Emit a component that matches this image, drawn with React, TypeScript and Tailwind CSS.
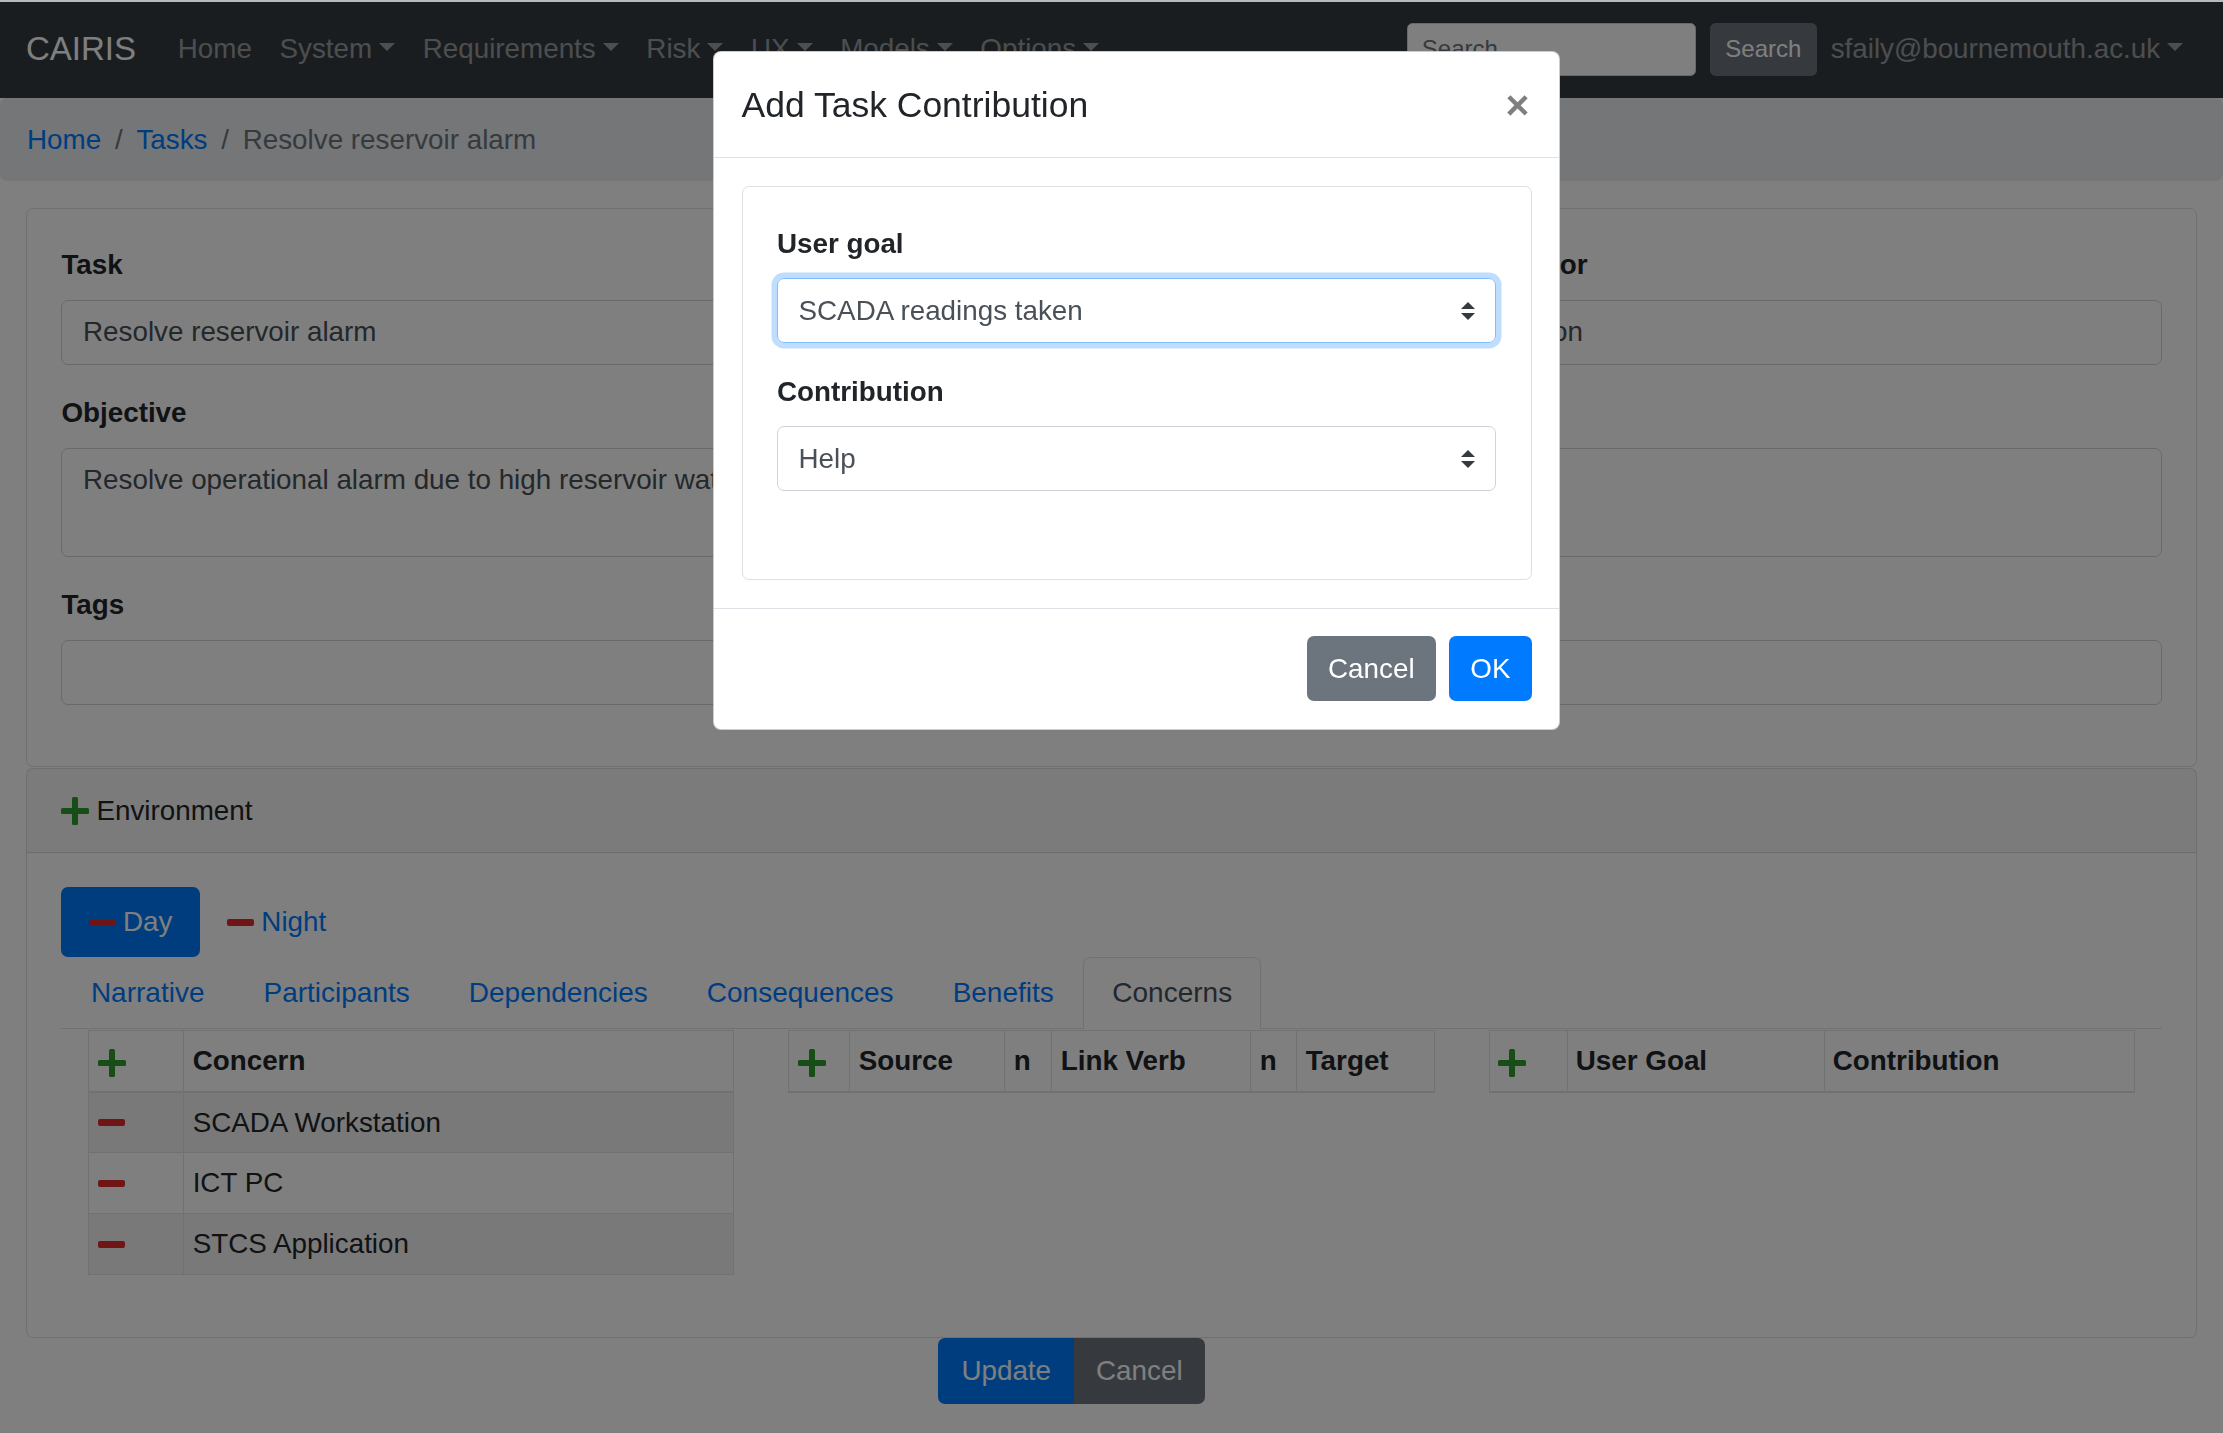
import React from "react";

// Small dropdown caret used by the navbar toggles.
function Caret() {
  return (
    <span className="ml-[0.255em] inline-block h-0 w-0 border-x-[0.3em] border-t-[0.3em] border-b-0 border-x-transparent border-t-current align-[0.255em]" />
  );
}

function PlusIcon() {
  return (
    <svg width="28" height="28" viewBox="0 0 28 28" className="inline-block shrink-0">
      <rect x="11" y="0" width="6" height="28" rx="1.5" fill="#2f9a2f" />
      <rect x="0" y="11" width="28" height="6" rx="1.5" fill="#2f9a2f" />
    </svg>
  );
}

function MinusIcon() {
  return <span className="inline-block h-[7px] w-[27px] shrink-0 rounded-[2px] bg-[#e02a2a]" />;
}

function SelectArrows() {
  return (
    <svg width="14" height="18" viewBox="0 0 14 18" className="shrink-0">
      <path d="M7 0 L14 7 L0 7 Z" fill="#343a40" />
      <path d="M0 11 L14 11 L7 18 Z" fill="#343a40" />
    </svg>
  );
}

function Field({ label, children }: { label: string; children: React.ReactNode }) {
  return (
    <div className="mb-[27.5px]">
      <label className="mb-[13.75px] block font-bold">{label || "\u00a0"}</label>
      {children}
    </div>
  );
}

const inputClass =
  "block h-[65px] w-full rounded-[7px] border border-[#ced4da] bg-white px-[20.6px] text-[#495057] outline-none";
const textareaClass =
  "block h-[109px] w-full resize-none rounded-[7px] border border-[#ced4da] bg-white px-[20.6px] py-[10.3px] text-[#495057] outline-none";

const navItems = ["System", "Requirements", "Risk", "UX", "Models", "Options"];
const tabs = ["Narrative", "Participants", "Dependencies", "Consequences", "Benefits"];
const concerns = ["SCADA Workstation", "ICT PC", "STCS Application"];

const cell = "border border-[#dee2e6] px-[8.25px] text-left align-middle";
const headCell = "border border-b-2 border-[#dee2e6] px-[8.25px] text-left align-middle font-bold";

export default function App() {
  return (
    <div className="relative min-h-[1433px] overflow-hidden bg-white font-['Liberation_Sans',Arial,sans-serif] text-[27.8px] leading-[1.5] text-[#212529]">
      {/* navbar */}
      <nav className="flex h-[98px] items-center bg-[#343a40] px-[26px]">
        <span className="mr-[28px] text-[33px] leading-[1.5] text-white">CAIRIS</span>
        <span className="px-[13.75px] text-white/50">Home</span>
        {navItems.map((item) => (
          <span className="px-[13.75px] text-white/50" key={item}>
            {item}
            <Caret />
          </span>
        ))}
        <div className="ml-auto flex items-center">
          <div className="mr-[13.75px] flex h-[53px] w-[289px] items-center rounded-[5.5px] border border-[#ced4da] bg-white px-[13.75px] text-[24px] text-[#6c757d]">
            Search
          </div>
          <span className="flex h-[53px] items-center rounded-[5.5px] border border-[#6c757d] bg-[#6c757d] px-[14.5px] text-[24px] text-white">
            Search
          </span>
          <span className="px-[13.75px] text-white/50">
            sfaily@bournemouth.ac.uk
            <Caret />
          </span>
        </div>
      </nav>

      {/* breadcrumb */}
      <ol className="mb-[27.5px] flex rounded-[7px] bg-[#e9ecef] px-[27px] py-[20.6px]">
        <li className="text-[#007bff]">Home</li>
        <li className="px-[13.75px] text-[#6c757d]">/</li>
        <li className="text-[#007bff]">Tasks</li>
        <li className="px-[13.75px] text-[#6c757d]">/</li>
        <li className="text-[#6c757d]">Resolve reservoir alarm</li>
      </ol>

      <div className="px-[26px]">
        {/* task card */}
        <div className="rounded-[7px] border border-black/[.125] px-[34.4px] pt-[35px] pb-[34px]">
          <div className="grid grid-cols-[1383fr_665fr] gap-x-[51.6px]">
            <div>
              <Field label="Task">
                <input className={inputClass} defaultValue="Resolve reservoir alarm" readOnly />
              </Field>
              <Field label="Objective">
                <textarea
                  className={textareaClass}
                  defaultValue="Resolve operational alarm due to high reservoir water level"
                  readOnly
                />
              </Field>
              <Field label="Tags">
                <input className={inputClass} defaultValue="" readOnly />
              </Field>
            </div>
            <div>
              <Field label="Author">
                <input className={inputClass} defaultValue="Anon" readOnly />
              </Field>
              <Field label="">
                <textarea className={textareaClass} defaultValue="" readOnly />
              </Field>
              <Field label="">
                <input className={inputClass} defaultValue="" readOnly />
              </Field>
            </div>
          </div>
        </div>

        {/* environment card */}
        <div className="mt-px rounded-[7px] border border-black/[.125]">
          <div className="flex items-center gap-[7px] border-b border-black/[.125] bg-black/[.03] px-[34.4px] py-[20.6px]">
            <PlusIcon />
            <span>Environment</span>
          </div>
          <div className="px-[34.4px] pt-[34.4px] pb-[34.4px]">
            <div className="flex">
              <span className="flex items-center gap-[7px] rounded-[7px] bg-[#007bff] px-[27.5px] py-[14px] text-white">
                <MinusIcon />
                Day
              </span>
              <span className="flex items-center gap-[7px] px-[27.5px] py-[14px] text-[#007bff]">
                <MinusIcon />
                Night
              </span>
            </div>
            <div className="flex border-b border-[#dee2e6] text-[28px]">
              {tabs.map((tab) => (
                <span className="-mb-px border border-transparent px-[28.5px] py-[14px] text-[#007bff]" key={tab}>
                  {tab}
                </span>
              ))}
              <span className="-mb-px rounded-t-[7px] border border-[#dee2e6] border-b-white bg-white px-[28px] py-[14px] text-[#495057]">
                Concerns
              </span>
            </div>
            <div className="mt-[1px] grid grid-cols-3 gap-x-[54px] px-[27px]">
              <table className="mb-[27.5px] w-full table-fixed border-collapse">
                <colgroup>
                  <col className="w-[95px]" />
                  <col />
                </colgroup>
                <thead>
                  <tr className="h-[61px]">
                    <th className={headCell}>
                      <PlusIcon />
                    </th>
                    <th className={headCell}>Concern</th>
                  </tr>
                </thead>
                <tbody>
                  {concerns.map((c, i) => (
                    <tr className={`h-[61px] ${i % 2 === 0 ? "bg-black/5" : ""}`} key={c}>
                      <td className={cell}>
                        <span className="flex items-center">
                          <MinusIcon />
                        </span>
                      </td>
                      <td className={cell}>{c}</td>
                    </tr>
                  ))}
                </tbody>
              </table>
              <table className="h-[61px] w-full table-fixed border-collapse self-start">
                <colgroup>
                  <col className="w-[61px]" />
                  <col className="w-[155px]" />
                  <col className="w-[47px]" />
                  <col className="w-[199px]" />
                  <col className="w-[46px]" />
                  <col />
                </colgroup>
                <thead>
                  <tr className="h-[61px]">
                    <th className={headCell}>
                      <PlusIcon />
                    </th>
                    <th className={headCell}>Source</th>
                    <th className={headCell}>n</th>
                    <th className={headCell}>Link Verb</th>
                    <th className={headCell}>n</th>
                    <th className={headCell}>Target</th>
                  </tr>
                </thead>
              </table>
              <table className="h-[61px] w-full table-fixed border-collapse self-start">
                <colgroup>
                  <col className="w-[78px]" />
                  <col className="w-[257px]" />
                  <col />
                </colgroup>
                <thead>
                  <tr className="h-[61px]">
                    <th className={headCell}>
                      <PlusIcon />
                    </th>
                    <th className={headCell}>User Goal</th>
                    <th className={headCell}>Contribution</th>
                  </tr>
                </thead>
              </table>
            </div>
          </div>
        </div>

        {/* form buttons */}
        <div className="flex justify-center pr-[80px]">
          <span className="flex h-[66px] items-center rounded-l-[7px] bg-[#007bff] px-[23px] text-white">Update</span>
          <span className="flex h-[66px] items-center rounded-r-[7px] bg-[#6c757d] px-[22px] text-white">Cancel</span>
        </div>
      </div>

      {/* backdrop */}
      <div className="fixed inset-0 z-40 bg-black/50" />
      <div className="fixed inset-x-0 top-0 z-50 h-[2px] bg-[#b9b9b9]" />

      {/* modal */}
      <div className="absolute top-[51px] left-[713px] z-50 w-[847px] rounded-[8px] border border-black/20 bg-white">
        <div className="flex items-start justify-between border-b border-[#dee2e6] px-[27.5px] py-[26.5px]">
          <h5 className="text-[35.5px] leading-[52px]">Add Task Contribution</h5>
          <span className="mr-[2px] text-[41px] leading-[52px] font-bold text-black/50">×</span>
        </div>
        <div className="p-[27.5px]">
          <div className="rounded-[7px] border border-black/[.125] px-[34.4px] pt-[36.5px] pb-[88px]">
            <label className="mb-[13.75px] block font-bold">User goal</label>
            <div className="mb-[27.5px] flex h-[65px] items-center justify-between rounded-[7px] border border-[#80bdff] px-[20.6px] text-[#495057] shadow-[0_0_0_5.5px_rgba(0,123,255,0.25)]">
              <span>SCADA readings taken</span>
              <SelectArrows />
            </div>
            <label className="mb-[13.75px] block font-bold">Contribution</label>
            <div className="flex h-[65px] items-center justify-between rounded-[7px] border border-[#ced4da] px-[20.6px] text-[#495057]">
              <span>Help</span>
              <SelectArrows />
            </div>
          </div>
        </div>
        <div className="flex items-center justify-end border-t border-[#dee2e6] p-[20.6px]">
          <span className="m-[6.9px] flex h-[65px] items-center rounded-[7px] bg-[#6c757d] px-[21px] text-white">Cancel</span>
          <span className="m-[6.9px] flex h-[65px] items-center rounded-[7px] bg-[#007bff] px-[21px] text-white">OK</span>
        </div>
      </div>
    </div>
  );
}
